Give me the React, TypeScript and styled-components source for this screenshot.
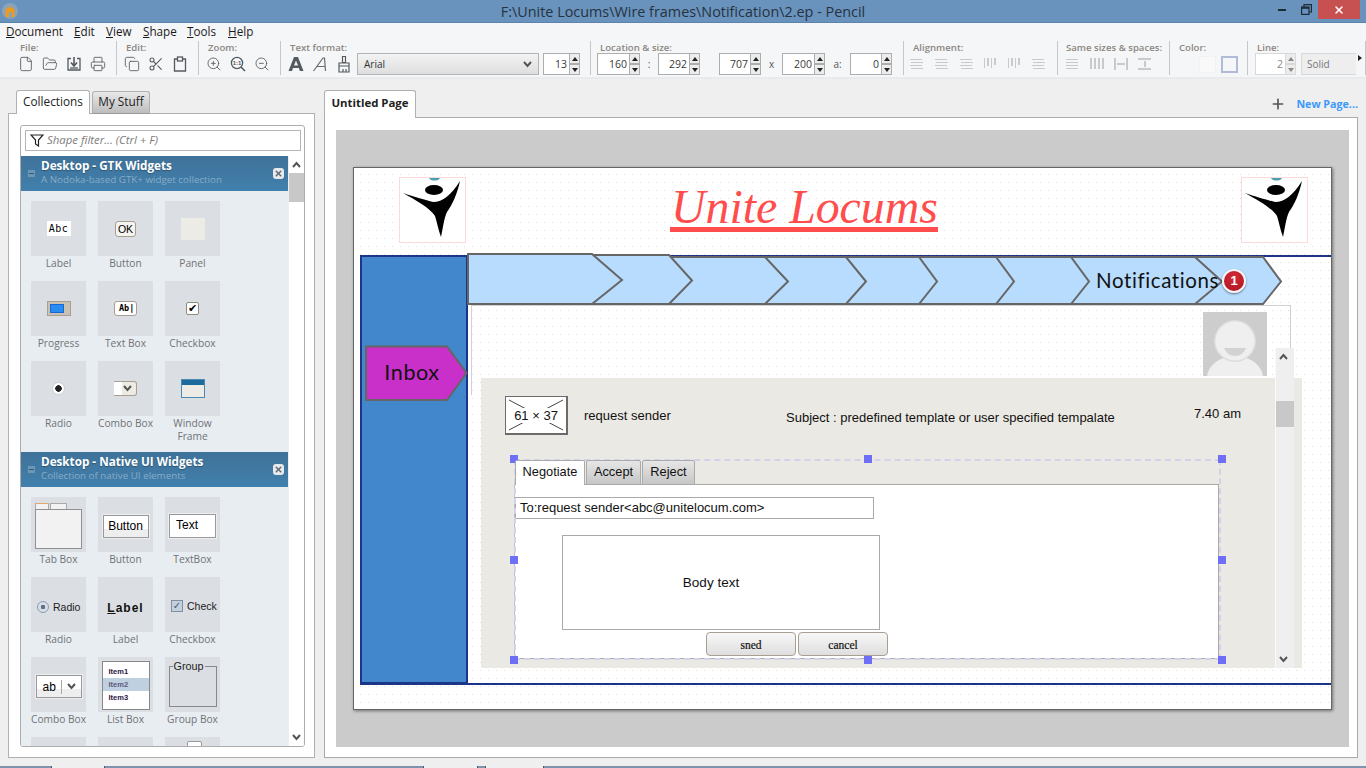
import React from 'react';
import { createGlobalStyle, styled } from 'styled-components';
import { Copy, File, FolderOpen, Plus, Printer, Scissors, X, ZoomIn, ZoomOut } from 'lucide-react';

const UI_FONT = '"Open Sans", "Noto Sans", sans-serif';
const ARIAL = '"Liberation Sans", Arial, sans-serif';
const COMIC = 'Lato, "Open Sans", sans-serif';

// the drawing sits on a free canvas: screen coordinates minus the page origin
const at = (x: number, y: number, w: number, h: number) => `
  position: absolute;
  left: ${x - 354}px;
  top: ${y - 168}px;
  width: ${w}px;
  height: ${h}px;
`;

const GlobalStyle = createGlobalStyle`
  html, body { margin: 0; padding: 0; overflow: hidden; }
  * { box-sizing: border-box; }
`;

const Shell = styled.div`
  width: 1366px;
  height: 768px;
  display: flex;
  flex-direction: column;
  overflow: hidden;
  background: #efefef;
  font-family: ${UI_FONT};
`;

const TitleBar = styled.div`
  height: 23px;
  flex: none;
  position: relative;
  display: flex;
  align-items: center;
  justify-content: center;
  background: #6993bd;
  border-bottom: 1px solid #5b83ab;
  color: #26323f;
  font-size: 14.4px;
`;

const AppIcon = styled.svg`
  position: absolute;
  left: 2px;
  top: 3px;
`;

const WindowControls = styled.div`
  position: absolute;
  right: 6px;
  top: 0;
  display: flex;
  align-items: flex-start;
`;

const WindowButton = styled.div`
  width: 24px;
  height: 19px;
  display: flex;
  align-items: center;
  justify-content: center;
  color: #1d2a38;
`;

const CloseButton = styled(WindowButton)`
  width: 42px;
  background: #c75050;
  color: #fff;
`;

const MenuBar = styled.div`
  height: 18px;
  flex: none;
  display: flex;
  align-items: center;
  padding: 0 0 2px 6px;
  background: #f5f6f8;
  font-size: 11.7px;
  color: #1b1b1b;
`;

const MenuItem = styled.span<{ $w: number }>`
  width: ${({ $w }) => $w}px;
  flex: none;
`;

const Toolbar = styled.div`
  height: 38px;
  flex: none;
  display: flex;
  background: #f5f6f8;
  border-bottom: 2px solid #e9eaec;
`;

const ToolGroup = styled.div<{ $w: number; $pad: number }>`
  width: ${({ $w }) => $w}px;
  flex: none;
  height: 34px;
  padding-left: ${({ $pad }) => $pad}px;
  border-right: 1px solid #c6c7c9;
`;

const ToolLabel = styled.div<{ $indent: number }>`
  height: 12px;
  margin-left: ${({ $indent }) => $indent}px;
  font-size: 9.6px;
  font-weight: 600;
  line-height: 14px;
  color: #8b8680;
  white-space: nowrap;
`;

const ToolRow = styled.div`
  height: 22px;
  display: flex;
  align-items: center;
`;

const ToolIcon = styled.div<{ $off?: boolean }>`
  width: 24px;
  height: 16px;
  flex: none;
  display: flex;
  align-items: center;
  justify-content: flex-start;
  color: ${({ $off }) => ($off ? '#c9cacc' : '#555a5e')};
`;

const FontSelect = styled.div`
  width: 182px;
  height: 22px;
  margin-left: -3px;
  margin-right: 4px;
  padding: 0 6px;
  flex: none;
  display: flex;
  align-items: center;
  justify-content: space-between;
  border: 1px solid #b4b4b4;
  background: linear-gradient(#f3f3f3, #dedede);
  font-size: 10px;
  color: #333;
`;

const Spin = styled.div<{ $w: number }>`
  width: ${({ $w }) => $w}px;
  height: 22px;
  flex: none;
  display: flex;
`;

const SpinValue = styled.div<{ $off?: boolean }>`
  flex: 1;
  height: 22px;
  padding-right: 2px;
  border: 1px solid ${({ $off }) => ($off ? '#d8d8d8' : '#adadad')};
  border-right: none;
  background: #fff;
  font-size: 10.5px;
  line-height: 20px;
  text-align: right;
  color: ${({ $off }) => ($off ? '#888' : '#3a3a3a')};
`;

const SpinButtons = styled.div`
  width: 11px;
  flex: none;
  display: flex;
  flex-direction: column;
`;

const SpinButton = styled.div<{ $down?: boolean; $off?: boolean }>`
  height: 11px;
  display: flex;
  align-items: center;
  justify-content: center;
  border: 1px solid ${({ $off }) => ($off ? '#d8d8d8' : '#adadad')};
  background: #ececec;

  &::after {
    content: '';
    border-left: 3px solid transparent;
    border-right: 3px solid transparent;
    ${({ $down, $off }) =>
      `${$down ? 'border-top' : 'border-bottom'}: 4px solid ${$off ? '#888' : '#222'};`}
  }
`;

const SpinSep = styled.span<{ $w: number }>`
  width: ${({ $w }) => $w}px;
  flex: none;
  text-align: center;
  font-size: 10px;
  color: #555;
`;

const ColorSwatch = styled.div<{ $stroke?: boolean }>`
  width: 17px;
  height: 17px;
  flex: none;
  margin-right: 5px;
  background: ${({ $stroke }) => ($stroke ? 'transparent' : '#f8f9f8')};
  border: ${({ $stroke }) => ($stroke ? '2px solid #b0bbd5' : '1px solid #f1f2f2')};
`;

const SolidSelect = styled.div`
  width: 55px;
  height: 22px;
  flex: none;
  margin-left: 5px;
  padding-left: 5px;
  border: 1px solid #d9d9d9;
  border-right: none;
  background: #eeeeee;
  font-size: 10px;
  line-height: 20px;
  color: #777;
`;

const OverflowArrow = styled.span`
  margin-left: 2px;
  margin-top: -12px;
  border-top: 3px solid transparent;
  border-bottom: 3px solid transparent;
  border-left: 4px solid #222;
`;

const Workspace = styled.div`
  flex: 1;
  display: flex;
  padding: 11px 8px 8px 8px;
  min-height: 0;
`;

const LeftColumn = styled.div`
  width: 307px;
  flex: none;
  display: flex;
  flex-direction: column;
`;

const RightColumn = styled.div`
  width: 1034px;
  margin-left: 9px;
  flex: none;
  display: flex;
  flex-direction: column;
`;

const TabStrip = styled.div`
  height: 24px;
  flex: none;
  display: flex;
  align-items: flex-end;
  gap: 2px;
  padding-left: 8px;
  position: relative;
  z-index: 1;
`;

const SideTab = styled.div<{ $active?: boolean; $w: number }>`
  width: ${({ $w }) => $w}px;
  height: ${({ $active }) => ($active ? 24 : 23)}px;
  border: 1px solid #b0b0b0;
  border-bottom: ${({ $active }) => ($active ? 'none' : '1px solid #999')};
  border-radius: 3px 3px 0 0;
  background: ${({ $active }) => ($active ? '#fff' : 'linear-gradient(#e9e9e9, #bdbdbd)')};
  font-size: 11.8px;
  line-height: ${({ $active }) => ($active ? 21 : 19)}px;
  text-align: center;
  color: #222;
`;

const SidePanel = styled.div`
  flex: 1;
  margin-top: -1px;
  min-height: 0;
  padding: 11px 9px 10px 11px;
  background: #fff;
  border: 1px solid #b0b0b0;
  display: flex;
`;

const Collections = styled.div`
  flex: 1;
  position: relative;
  border: 1px solid #adadad;
  border-radius: 3px;
  overflow: hidden;
  display: flex;
  flex-direction: column;
`;

const FilterBox = styled.div`
  height: 21px;
  flex: none;
  margin: 4px 3px 5px 4px;
  padding: 0 0 2px 4px;
  display: flex;
  align-items: center;
  gap: 3px;
  border: 1px solid #b5b5b5;
  font-size: 11.4px;
  font-style: italic;
  color: #7d7d7d;
`;

const ListArea = styled.div`
  flex: 1;
  min-height: 0;
  display: flex;
`;

const CategoryList = styled.div`
  width: 267px;
  flex: none;
  overflow: hidden;
  background: #e8edf1;
`;

const ListScroll = styled.div`
  width: 16px;
  flex: none;
  position: relative;
  background: #fff;
  border-left: 1px solid #eee;
`;

const ListThumb = styled.div`
  position: absolute;
  left: 0;
  top: 17px;
  width: 15px;
  height: 29px;
  background: #c8c8c8;
`;

const ScrollArrow = styled.svg<{ $bottom?: boolean }>`
  position: absolute;
  left: 3px;
  ${({ $bottom }) => ($bottom ? 'bottom: 5px;' : 'top: 5px;')}
`;

const CategoryHead = styled.div`
  height: 35px;
  position: relative;
  padding: 2px 0 0 20px;
  background: linear-gradient(#3f7299, #4180ad);
`;

const CategoryTitle = styled.div`
  font-size: 11.7px;
  font-weight: 700;
  line-height: 15px;
  color: #fff;
  text-shadow: 0 1px 1px #2b5572;
`;

const CategorySub = styled.div`
  font-size: 9.8px;
  line-height: 13px;
  color: #87abc8;
`;

const Collapse = styled.span`
  position: absolute;
  left: 7px;
  top: 14px;
  width: 7px;
  height: 7px;
  background: #6d96b4;

  &::after {
    content: '';
    position: absolute;
    left: 1px;
    right: 1px;
    top: 3px;
    height: 1px;
    background: #2f5a7a;
  }
`;

const Dismiss = styled.span`
  position: absolute;
  left: 252px;
  top: 12px;
  width: 11px;
  height: 11px;
  border-radius: 3px;
  background: #e7e9ea;
  display: flex;
  align-items: center;
  justify-content: center;
  color: #5d6a75;
`;

const ShapeGrid = styled.div`
  display: grid;
  grid-template-columns: repeat(3, 55px);
  grid-auto-rows: 80px;
  column-gap: 12px;
  padding: 10px 0 11px 10px;
`;

const ShapeCell = styled.div`
  width: 55px;
  display: flex;
  flex-direction: column;
  align-items: center;
`;

const Tile = styled.div`
  width: 55px;
  height: 55px;
  flex: none;
  position: relative;
  display: flex;
  align-items: center;
  justify-content: center;
  overflow: hidden;
  background: #dbdfe3;
  color: #000;
`;

const ShapeName = styled.div`
  width: 67px;
  font-size: 10.2px;
  line-height: 13px;
  padding-top: 1px;
  text-align: center;
  color: #6f7276;
`;

const MiniLabel = styled.div`
  width: 24px;
  height: 15px;
  background: #fff;
  font: 10px/15px "DejaVu Sans Mono", monospace;
  letter-spacing: 0.5px;
  text-align: center;
`;

const MiniOk = styled.div`
  width: 21px;
  height: 16px;
  background: #f6f4f0;
  border: 1px solid #a89f92;
  border-radius: 3px;
  font: 10.5px/14px ${ARIAL};
  text-align: center;
`;

const MiniPanel = styled.div`
  width: 24px;
  height: 22px;
  background: #edebe5;
`;

const MiniProgress = styled.div`
  width: 24px;
  height: 15px;
  padding: 2px 6px 2px 2px;
  background: #c9c1b3;
  border: 1px solid #a89f92;

  &::after {
    content: '';
    display: block;
    height: 100%;
    background: #2b8cf0;
    box-shadow: inset 0 0 0 1px #1668d8;
  }
`;

const MiniText = styled.div`
  width: 23px;
  height: 15px;
  padding-left: 4px;
  background: #fff;
  border: 1px solid #a89f92;
  border-radius: 3px;
  font: 700 8.5px/13px "DejaVu Sans Mono", monospace;
  text-align: left;
`;

const MiniCheck = styled.div`
  width: 13px;
  height: 13px;
  background: #fff;
  border: 1px solid #8f8a82;
  border-radius: 2px;
  font: 700 11px/11px "DejaVu Sans", sans-serif;
  text-align: center;
`;

const MiniRadio = styled.div`
  width: 13px;
  height: 13px;
  border-radius: 50%;
  background: radial-gradient(circle, #222 0 3px, #fff 3.5px);
  border: 1px solid #cfcfcf;
`;

const MiniCombo = styled.div`
  width: 23px;
  height: 15px;
  display: flex;
  border-radius: 0 3px 3px 0;
  border: 1px solid #a89f92;
  border-left: none;
  background: linear-gradient(to right, #fff 0 8px, #eeebe5 8px);
  align-items: center;
  justify-content: flex-end;
  padding-right: 4px;
`;

const MiniWindow = styled.div`
  width: 24px;
  height: 19px;
  border: 1px solid #4a8ab5;
  background: #edebe5;

  &::before {
    content: '';
    display: block;
    height: 5px;
    background: #1c6b9c;
  }
`;

const NativeTabBox = styled.div`
  width: 47px;
  height: 40px;
  margin-top: 9px;
  border: 1px solid #909090;
  background: #f2f2f2;
  position: relative;
`;

const NativeTabs = styled.div`
  position: absolute;
  left: -1px;
  top: -7px;
  display: flex;
  gap: 1px;
`;

const NativeTabHead = styled.div<{ $active?: boolean; $w: number }>`
  width: ${({ $w }) => $w}px;
  height: 6px;
  border: 1px solid #aaa;
  border-bottom: none;
  border-top: 1px solid ${({ $active }) => ($active ? '#e6a868' : '#aaa')};
  background: #f2f2f2;
`;

const NativeButton = styled.div`
  width: 46px;
  height: 23px;
  margin-top: 4px;
  background: linear-gradient(#fff 60%, #eee 60%);
  border: 1px solid #999;
  font: 12px/21px ${ARIAL};
  text-align: center;
  box-shadow: 0 0 0 1px #eceef0;
`;

const NativeText = styled.div`
  width: 47px;
  height: 24px;
  margin-top: 3px;
  padding-left: 6px;
  background: #fff;
  border: 1px solid #999;
  font: 12px/20px ${ARIAL};
  text-align: left;
  box-shadow: 0 0 0 1px #eceef0;
`;

const NativeOption = styled.div<{ $drop: number }>`
  width: 100%;
  margin-top: ${({ $drop }) => $drop}px;
  padding-left: 6px;
  display: flex;
  align-items: center;
  gap: 4px;
  font: 10.5px ${ARIAL};
  color: #222;
  white-space: nowrap;
`;

const NativeRadio = styled.span`
  width: 12px;
  height: 12px;
  flex: none;
  border-radius: 50%;
  border: 1px solid #8b9db0;
  background: radial-gradient(circle, #5d7186 0 2px, #d7dee6 2.5px);
`;

const NativeCheck = styled.span`
  width: 12px;
  height: 12px;
  flex: none;
  border: 1px solid #7d90a5;
  background: #c4d0dc;
  font: 700 10px/10px "DejaVu Sans", sans-serif;
  color: #475a70;
  text-align: center;
`;

const NativeLabel = styled.div`
  margin-top: 6px;
  font: 700 12px ${ARIAL};
  letter-spacing: 1px;
  color: #111;
`;

const NativeCombo = styled.div`
  width: 46px;
  height: 23px;
  margin-top: 4px;
  display: flex;
  align-items: center;
  padding-left: 6px;
  background: linear-gradient(#fff 60%, #eee 60%);
  border: 1px solid #999;
  font: 12px ${ARIAL};
  gap: 5px;
  box-shadow: 0 0 0 1px #eceef0;
`;

const ComboRule = styled.span`
  width: 1px;
  height: 14px;
  background: #aaa;
`;

const NativeList = styled.div`
  width: 48px;
  height: 49px;
  margin-top: 2px;
  padding-top: 3px;
  background: #fff;
  border: 1px solid #888;
`;

const NativeListItem = styled.div<{ $active?: boolean }>`
  height: 13px;
  padding-left: 6px;
  font: 700 7.5px/13px ${ARIAL};
  color: ${({ $active }) => ($active ? '#5b5b7a' : '#2c1540')};
  background: ${({ $active }) => ($active ? '#bfd0e0' : 'transparent')};
`;

const NativeGroup = styled.div`
  width: 48px;
  height: 41px;
  margin-top: 3px;
  border: 1px solid #888;
  position: relative;
`;

const NativeGroupName = styled.span`
  position: absolute;
  left: 3px;
  top: -7px;
  padding: 0 1px;
  background: #dbdfe3;
  font: 10.8px/13px ${ARIAL};
  color: #222;
`;

const StubBox = styled.div`
  position: absolute;
  left: 22px;
  top: 4px;
  width: 15px;
  height: 20px;
  background: #fff;
  border: 1px solid #999;
  border-radius: 2px 2px 0 0;
`;

const PageHead = styled.div`
  height: 28px;
  flex: none;
  margin-bottom: -1px;
  display: flex;
  align-items: center;
  position: relative;
  z-index: 1;
`;

const PageTab = styled.div`
  width: 92px;
  height: 28px;
  border: 1px solid #b0b0b0;
  border-bottom: none;
  border-radius: 3px 3px 0 0;
  background: #fff;
  font-size: 11.4px;
  font-weight: 700;
  line-height: 23px;
  text-align: center;
  color: #222;
`;

const NewPage = styled.div`
  margin-left: auto;
  display: flex;
  align-items: center;
  gap: 10px;
  padding-bottom: 1px;
  font-size: 10.7px;
  font-weight: 700;
  color: #3c99fa;
  white-space: nowrap;
`;

const PagePanel = styled.div`
  flex: 1;
  min-height: 0;
  padding: 12px 8px 10px 11px;
  background: #fff;
  border: 1px solid #aaa;
  display: flex;
`;

const GreyDesk = styled.div`
  flex: 1;
  padding: 37px 17px 0 17px;
  background: #cbcbcb;
`;

const dots = `
  background-color: #dedede;
  background-image:
    linear-gradient(to right, transparent 1px, #fff 1px),
    linear-gradient(to bottom, transparent 1px, #fff 1px);
  background-size: 8px 8px;
`;

const Sheet = styled.div`
  width: 979px;
  height: 543px;
  position: relative;
  border: 1px solid #666;
  box-shadow: 1px 1px 3px rgba(0, 0, 0, 0.45);
  ${dots}
  background-position: 6px 6px;
`;

const LogoFrame = styled.div<{ $x: number }>`
  ${({ $x }) => at($x, 177, 67, 66)}
  background: #fff;
  border: 1px solid #fddada;
`;

const BrandTitle = styled.div`
  ${at(670, 183, 268, 49)}
  border-bottom: 5px solid #ff4d4d;
  font: italic 47.8px/48px "Liberation Serif", "Times New Roman", serif;
  color: #ff4d4d;
  padding-left: 1px;
  white-space: nowrap;
`;

const NavyLine = styled.div<{ $x: number; $y: number; $w: number }>`
  ${({ $x, $y, $w }) => at($x, $y, $w, 2)}
  background: #1c3589;
`;

const SideBlock = styled.div`
  ${at(360, 255, 108, 429)}
  background: #4286cb;
  border: 2px solid #1c3589;
`;

const ChevronSvg = styled.svg`
  ${at(466, 252, 818, 55)}
`;

const InboxSvg = styled.svg`
  ${at(364, 345, 104, 57)}
`;

const InboxText = styled.div`
  ${at(365, 345, 94, 54)}
  font: 400 21.5px/54px ${COMIC};
  letter-spacing: 0.6px;
  text-align: center;
  color: #111;
`;

const NotificationText = styled.div`
  ${at(1096, 265, 124, 30)}
  font: 400 20.5px/30px ${COMIC};
  letter-spacing: 0.6px;
  color: #111;
  white-space: nowrap;
`;

const Badge = styled.div`
  ${at(1222, 269, 24, 24)}
  border-radius: 50%;
  border: 2px solid #f4f4f4;
  background: radial-gradient(circle at 50% 30%, #d32a35, #ab1520);
  box-shadow: 0 1px 2px rgba(0, 0, 0, 0.5);
  font: 700 13px/20px ${ARIAL};
  text-align: center;
  color: #fff;
`;

const InnerFrame = styled.div`
  ${at(471, 305, 820, 90)}
  border: 1px solid #d0d0d0;
  border-bottom: none;
`;

const AvatarSvg = styled.svg`
  ${at(1203, 312, 64, 64)}
`;

const MailPanel = styled.div`
  ${at(481, 378, 821, 290)}
  background: #ebe9e3;
  padding-top: 18px;
`;

const MailRow = styled.div`
  height: 39px;
  padding-left: 24px;
  display: flex;
  align-items: center;
  font: 13px ${ARIAL};
  color: #111;
`;

const Placeholder = styled.div`
  width: 63px;
  height: 39px;
  flex: none;
  position: relative;
  display: flex;
  align-items: center;
  justify-content: center;
  background: #fff;
  border: 2px solid #6b6b6b;
  border-top-width: 1px;
  border-left-width: 1px;
  font: 13px ${ARIAL};
`;

const PlaceholderLines = styled.svg`
  position: absolute;
  inset: 0;
`;

const PlaceholderText = styled.span`
  position: relative;
  background: #fff;
  padding: 0 1px;
`;

const Sender = styled.span`
  margin-left: 16px;
  width: 202px;
  flex: none;
`;

const Subject = styled.span`
  width: 408px;
  flex: none;
  margin-top: 4px;
`;

const SentAt = styled.span`
  margin-top: -5px;
`;

const TabWidget = styled.div`
  position: relative;
  width: 705px;
  height: 198px;
  margin: 25px 0 0 33px;
`;

const WidgetTabs = styled.div`
  height: 25px;
  display: flex;
  gap: 1px;
  padding-left: 1px;
  position: relative;
  z-index: 1;
`;

const WidgetTab = styled.div<{ $active?: boolean; $w: number }>`
  width: ${({ $w }) => $w}px;
  height: 25px;
  border: 1px solid #aaa;
  border-bottom: ${({ $active }) => ($active ? 'none' : '1px solid #aaa')};
  border-radius: 2px 2px 0 0;
  background: ${({ $active }) => ($active ? '#fff' : 'linear-gradient(#e6e6e6, #c6c6c6)')};
  font: 12.8px/22px ${ARIAL};
  text-align: center;
  color: #111;
`;

const WidgetBody = styled.div`
  height: 175px;
  margin-top: -1px;
  padding-top: 12px;
  background: #fff;
  border: 1px solid #aaa;
  border-left-color: #bcbcd8;
`;

const ToInput = styled.div`
  width: 359px;
  height: 22px;
  padding-left: 4px;
  border: 1px solid #aaa;
  font: 13px/20px ${ARIAL};
  color: #111;
  white-space: nowrap;
`;

const BodyBox = styled.div`
  width: 318px;
  height: 95px;
  margin: 16px 0 0 47px;
  padding-right: 20px;
  display: flex;
  align-items: center;
  justify-content: center;
  border: 1px solid #aaa;
  font: 13.5px ${ARIAL};
  color: #111;
`;

const FormButtons = styled.div`
  margin: 2px 0 0 191px;
  display: flex;
  gap: 2px;
`;

const FormButton = styled.div`
  width: 90px;
  height: 24px;
  border: 1px solid #a89f92;
  border-radius: 4px;
  background: linear-gradient(#f8f8f8, #dedede);
  font: 500 11.5px/24px "Liberation Serif", serif;
  text-align: center;
  color: #111;
  -webkit-text-stroke: 0.2px #111;
`;

const Selection = styled.div`
  position: absolute;
  left: 0;
  top: -1px;
  width: 707px;
  height: 201px;
  border: 2px dashed #d4d2ea;
  pointer-events: none;
`;

const Handle = styled.span<{ $col: number; $row: number }>`
  position: absolute;
  width: 8px;
  height: 8px;
  background: #6f6ff5;
  left: ${({ $col }) => -6 + $col * 354}px;
  top: ${({ $row }) => -6 + $row * 100.5}px;
`;

const PanelScroll = styled.div`
  ${at(1275, 348, 19, 320)}
  background: #efefef;
  border-left: 1px solid #fafafa;
`;

const PanelThumb = styled.div`
  position: absolute;
  left: 0;
  top: 53px;
  width: 18px;
  height: 26px;
  background: #c8c8c8;
`;

const StatusStrip = styled.div`
  height: 2px;
  flex: none;
  position: relative;
  background: #7d93ae;
`;

const StatusTab = styled.span<{ $x: number; $w: number }>`
  position: absolute;
  left: ${({ $x }) => $x}px;
  width: ${({ $w }) => $w}px;
  top: 0;
  height: 2px;
  background: #eef0f2;
  border-left: 1px solid #555;
  border-right: 1px solid #555;
`;

const Chevron = ({ up }: { up?: boolean }) => (
  <svg width="9" height="7" viewBox="0 0 9 7" fill="none" stroke="#555" strokeWidth="2">
    <path d={up ? 'M1 6l3.5-4L8 6' : 'M1 1l3.5 4L8 1'} />
  </svg>
);

const SmallX = () => <X size={9} strokeWidth={4} />;

const MinimizeGlyph = () => (
  <svg width="8" height="2" viewBox="0 0 8 2" fill="currentColor">
    <rect width="8" height="2" />
  </svg>
);

const RestoreGlyph = () => (
  <svg width="11" height="11" viewBox="0 0 11 11" fill="none" stroke="currentColor" strokeWidth="1.2">
    <path d="M3 3V.6h7.400V8H8" />
    <rect x=".6" y="3" width="7.400" height="7.400" />
    <path d="M.6 4h7.400" strokeWidth="1.6" />
  </svg>
);

const SaveIcon = () => (
  <svg width="16" height="16" viewBox="0 0 16 16" fill="none" stroke="currentColor" strokeWidth="1.3">
    <path d="M5 2.500H2v11.500h12V2.500h-3" />
    <path d="M8 1v8M5 6.500L8 10l3-3.500" strokeWidth="1.600" />
    <path d="M4 12h8" />
  </svg>
);

const PasteIcon = () => (
  <svg width="16" height="16" viewBox="0 0 16 16" fill="none" stroke="currentColor" strokeWidth="1.3">
    <path d="M5 3H2.500v12h11V3H11" />
    <rect x="5.500" y="1" width="5" height="4" />
  </svg>
);

const ActualSizeIcon = () => (
  <svg width="16" height="16" viewBox="0 0 16 16" fill="none" stroke="currentColor" strokeWidth="1.3">
    <circle cx="7" cy="7" r="5.600" />
    <path d="M11 11l4 4" strokeWidth="1.600" />
    <text x="7" y="9" fontSize="6" fontWeight="700" textAnchor="middle" fill="currentColor" stroke="none" fontFamily="Liberation Sans">1:1</text>
  </svg>
);

const BoldA = () => (
  <svg width="16" height="16" viewBox="0 0 16 16" fill="#555a5e">
    <path d="M6 1h4l5.500 14h-3.600l-1-3H5l-1 3H.5zM8 4.500L6 9.500h4z" fillRule="evenodd" />
  </svg>
);

const ItalicA = () => (
  <svg width="16" height="16" viewBox="0 0 16 16" fill="none" stroke="#666b70" strokeWidth="1.2">
    <path d="M1.500 15L11 2h1.500L13.500 15M4.500 10.500h8.500" />
  </svg>
);

const BrushIcon = () => (
  <svg width="16" height="18" viewBox="0 0 16 18" fill="none" stroke="#555a5e" strokeWidth="1.2">
    <path d="M6.500 1.500h3v6h-3zM3 8h10v3H3zM3 11h10v6H3z" />
    <path d="M7 14v3M10 14v3" />
  </svg>
);

const Lines = ({ rows }: { rows: number[][] }) => (
  <svg width="16" height="12" viewBox="0 0 16 12" fill="currentColor">
    {rows.map((r, i) => (
      <rect key={i} x={r[0]} y={r[1]} width={r[2]} height={r[3]} />
    ))}
  </svg>
);

const hLines = (x: number[]) => x.map((v, i) => [v, 1 + i * 3, 12, 1]);
const vLines = [[2, 0, 1, 10], [5, 0, 2, 8], [9, 0, 1, 10], [12, 0, 2, 7]];

const SpinBox = ({ value, w, off }: { value: string; w: number; off?: boolean }) => (
  <Spin $w={w}>
    <SpinValue $off={off}>{value}</SpinValue>
    <SpinButtons>
      <SpinButton $off={off} />
      <SpinButton $off={off} $down />
    </SpinButtons>
  </Spin>
);

const LogoPerson = () => (
  <svg width="65" height="64" viewBox="0 0 65 64">
    <path d="M29 0h11c-1 2-3 2.500-5.500 2.500S30 2 29 0z" fill="#4aa0ad" />
    <ellipse cx="34" cy="12" rx="9" ry="5" fill="#000" />
    <path d="M3 15C14 19 26 22 33 24c10 0 18-7 27-21-3 14-8 24-13 31-3 6-4 16-6 25-3-8-4-15-6-21C30 30 17 23 3 15z" fill="#000" />
  </svg>
);

const menuItems: [string, string, number][] = [
  ['D', 'ocument', 68],
  ['E', 'dit', 32],
  ['V', 'iew', 37],
  ['S', 'hape', 44],
  ['T', 'ools', 41],
  ['H', 'elp', 40],
];

const gtkShapes: [string, React.ReactNode][] = [
  ['Label', <MiniLabel>Abc</MiniLabel>],
  ['Button', <MiniOk>OK</MiniOk>],
  ['Panel', <MiniPanel />],
  ['Progress', <MiniProgress />],
  ['Text Box', <MiniText>Ab|</MiniText>],
  ['Checkbox', <MiniCheck>✔</MiniCheck>],
  ['Radio', <MiniRadio />],
  ['Combo Box', <MiniCombo><Chevron /></MiniCombo>],
  ['Window Frame', <MiniWindow />],
];

const nativeShapes: [string, React.ReactNode][] = [
  ['Tab Box', (
    <NativeTabBox>
      <NativeTabs>
        <NativeTabHead $active $w={14} />
        <NativeTabHead $w={17} />
      </NativeTabs>
    </NativeTabBox>
  )],
  ['Button', <NativeButton>Button</NativeButton>],
  ['TextBox', <NativeText>Text</NativeText>],
  ['Radio', <NativeOption $drop={5}><NativeRadio />Radio</NativeOption>],
  ['Label', <NativeLabel><u>L</u>abel</NativeLabel>],
  ['Checkbox', <NativeOption $drop={2}><NativeCheck>✓</NativeCheck>Check</NativeOption>],
  ['Combo Box', <NativeCombo>ab<ComboRule /><Chevron /></NativeCombo>],
  ['List Box', (
    <NativeList>
      <NativeListItem>Item1</NativeListItem>
      <NativeListItem $active>Item2</NativeListItem>
      <NativeListItem>Item3</NativeListItem>
    </NativeList>
  )],
  ['Group Box', <NativeGroup><NativeGroupName>Group</NativeGroupName></NativeGroup>],
  ['', null],
  ['', null],
  ['', <StubBox />],
];

const ShapeSet = ({ shapes }: { shapes: [string, React.ReactNode][] }) => (
  <ShapeGrid>
    {shapes.map(([name, art], i) => (
      <ShapeCell key={i}>
        <Tile>{art}</Tile>
        <ShapeName>{name}</ShapeName>
      </ShapeCell>
    ))}
  </ShapeGrid>
);

const Category = ({ title, sub }: { title: string; sub: string }) => (
  <CategoryHead>
    <Collapse />
    <CategoryTitle>{title}</CategoryTitle>
    <CategorySub>{sub}</CategorySub>
    <Dismiss><SmallX /></Dismiss>
  </CategoryHead>
);

// knee of each arrow in the breadcrumb and its tip, left to right
const crumbs = [
  [468, 592, 622, 254],
  [592, 669, 692, 255],
  [669, 765, 788, 257],
  [765, 846, 866, 257],
  [846, 919, 937, 257],
  [919, 996, 1014, 257],
  [996, 1071, 1089, 257],
  [1071, 1195, 1222, 257],
  [1195, 1263, 1281, 257],
];

export default function App() {
  return (
    <Shell>
      <GlobalStyle />
      <TitleBar>
        <AppIcon width="16" height="16" viewBox="0 0 16 16">
          <circle cx="8" cy="8" r="8" fill="#8aa3b8" />
          <path d="M3.500 6.500L8 3.500l4.500 3V14h-2.500V9h-3v5H3.500z" fill="#f09a1a" />
        </AppIcon>
        F:\Unite Locums\Wire frames\Notification\2.ep - Pencil
        <WindowControls>
          <WindowButton><MinimizeGlyph /></WindowButton>
          <WindowButton><RestoreGlyph /></WindowButton>
          <CloseButton><X size={12} strokeWidth={3} /></CloseButton>
        </WindowControls>
      </TitleBar>

      <MenuBar>
        {menuItems.map(([key, rest, w]) => (
          <MenuItem key={key} $w={w}><u>{key}</u>{rest}</MenuItem>
        ))}
      </MenuBar>

      <Toolbar>
        <ToolGroup $w={117} $pad={18}>
          <ToolLabel $indent={2}>File:</ToolLabel>
          <ToolRow>
            <ToolIcon><File size={16} strokeWidth={1.3} /></ToolIcon>
            <ToolIcon><FolderOpen size={16} strokeWidth={1.3} /></ToolIcon>
            <ToolIcon><SaveIcon /></ToolIcon>
            <ToolIcon><Printer size={16} strokeWidth={1.3} /></ToolIcon>
          </ToolRow>
        </ToolGroup>
        <ToolGroup $w={82} $pad={7}>
          <ToolLabel $indent={2}>Edit:</ToolLabel>
          <ToolRow>
            <ToolIcon><Copy size={16} strokeWidth={1.3} /></ToolIcon>
            <ToolIcon><Scissors size={16} strokeWidth={1.6} /></ToolIcon>
            <ToolIcon><PasteIcon /></ToolIcon>
          </ToolRow>
        </ToolGroup>
        <ToolGroup $w={82} $pad={7}>
          <ToolLabel $indent={2}>Zoom:</ToolLabel>
          <ToolRow>
            <ToolIcon><ZoomIn size={16} strokeWidth={1.3} /></ToolIcon>
            <ToolIcon><ActualSizeIcon /></ToolIcon>
            <ToolIcon><ZoomOut size={16} strokeWidth={1.3} /></ToolIcon>
          </ToolRow>
        </ToolGroup>
        <ToolGroup $w={310} $pad={7}>
          <ToolLabel $indent={2}>Text format:</ToolLabel>
          <ToolRow>
            <ToolIcon><BoldA /></ToolIcon>
            <ToolIcon><ItalicA /></ToolIcon>
            <ToolIcon><BrushIcon /></ToolIcon>
            <FontSelect>Arial<Chevron /></FontSelect>
            <SpinBox value="13" w={37} />
          </ToolRow>
        </ToolGroup>
        <ToolGroup $w={313} $pad={6}>
          <ToolLabel $indent={3}>Location &amp; size:</ToolLabel>
          <ToolRow>
            <SpinBox value="160" w={43} />
            <SpinSep $w={18}>:</SpinSep>
            <SpinBox value="292" w={42} />
            <SpinSep $w={19} />
            <SpinBox value="707" w={42} />
            <SpinSep $w={21}>x</SpinSep>
            <SpinBox value="200" w={43} />
            <SpinSep $w={25}>a:</SpinSep>
            <SpinBox value="0" w={42} />
          </ToolRow>
        </ToolGroup>
        <ToolGroup $w={154} $pad={6}>
          <ToolLabel $indent={3}>Alignment:</ToolLabel>
          <ToolRow>
            {[0, 1, 2].map(i => (
              <ToolIcon key={i} $off><Lines rows={hLines([i, i + 1, i, i + 1])} /></ToolIcon>
            ))}
            {[0, 1].map(i => (
              <ToolIcon key={i} $off><Lines rows={vLines} /></ToolIcon>
            ))}
            <ToolIcon $off><Lines rows={hLines([2, 3, 2, 3])} /></ToolIcon>
          </ToolRow>
        </ToolGroup>
        <ToolGroup $w={112} $pad={7}>
          <ToolLabel $indent={1}>Same sizes &amp; spaces:</ToolLabel>
          <ToolRow>
            <ToolIcon $off><Lines rows={hLines([1, 1, 1, 1])} /></ToolIcon>
            <ToolIcon $off><Lines rows={[[1, 0, 2, 11], [5, 0, 2, 11], [9, 0, 2, 11], [13, 0, 2, 11]]} /></ToolIcon>
            <ToolIcon $off><Lines rows={[[1, 0, 2, 12], [13, 0, 2, 12], [4, 5, 8, 2]]} /></ToolIcon>
            <ToolIcon $off><Lines rows={[[1, 0, 13, 2], [1, 10, 13, 2], [7, 3, 2, 6]]} /></ToolIcon>
          </ToolRow>
        </ToolGroup>
        <ToolGroup $w={78} $pad={9}>
          <ToolLabel $indent={0}>Color:</ToolLabel>
          <ToolRow>
            <SpinSep $w={20} />
            <ColorSwatch />
            <ColorSwatch $stroke />
          </ToolRow>
        </ToolGroup>
        <ToolGroup $w={118} $pad={7}>
          <ToolLabel $indent={2}>Line:</ToolLabel>
          <ToolRow>
            <SpinBox value="2" w={41} off />
            <SolidSelect>Solid</SolidSelect>
            <OverflowArrow />
          </ToolRow>
        </ToolGroup>
      </Toolbar>

      <Workspace>
        <LeftColumn>
          <TabStrip>
            <SideTab $active $w={74}>Collections</SideTab>
            <SideTab $w={58}>My Stuff</SideTab>
          </TabStrip>
          <SidePanel>
            <Collections>
              <FilterBox>
                <svg width="14" height="14" viewBox="0 0 14 14" fill="none" stroke="#222" strokeWidth="1.2">
                  <path d="M1 2h12L8.500 7v6l-3-2V7z" />
                </svg>
                Shape filter... (Ctrl + F)
              </FilterBox>
              <ListArea>
                <CategoryList>
                  <Category title="Desktop - GTK Widgets" sub="A Nodoka-based GTK+ widget collection" />
                  <ShapeSet shapes={gtkShapes} />
                  <Category title="Desktop - Native UI Widgets" sub="Collection of native UI elements" />
                  <ShapeSet shapes={nativeShapes} />
                </CategoryList>
                <ListScroll>
                  <ScrollArrow width="9" height="7" viewBox="0 0 9 7" fill="none" stroke="#555" strokeWidth="2">
                    <path d="M1 6l3.500-4L8 6" />
                  </ScrollArrow>
                  <ListThumb />
                  <ScrollArrow $bottom width="9" height="7" viewBox="0 0 9 7" fill="none" stroke="#555" strokeWidth="2">
                    <path d="M1 1l3.500 4L8 1" />
                  </ScrollArrow>
                </ListScroll>
              </ListArea>
            </Collections>
          </SidePanel>
        </LeftColumn>

        <RightColumn>
          <PageHead>
            <PageTab>Untitled Page</PageTab>
            <NewPage>
              <Plus size={16} strokeWidth={2.5} color="#555" />
              New Page...
            </NewPage>
          </PageHead>
          <PagePanel>
            <GreyDesk>
              <Sheet>
                <LogoFrame $x={399}><LogoPerson /></LogoFrame>
                <BrandTitle>Unite Locums</BrandTitle>
                <LogoFrame $x={1241}><LogoPerson /></LogoFrame>

                <NavyLine $x={468} $y={255} $w={863} />
                <NavyLine $x={360} $y={683} $w={971} />
                <SideBlock />

                <InnerFrame />
                <AvatarSvg viewBox="0 0 64 64">
                  <rect width="64" height="64" fill="#cdcdcd" />
                  <ellipse cx="32" cy="66" rx="28" ry="22" fill="#efefef" />
                  <circle cx="32" cy="29" r="21" fill="#dedede" />
                  <circle cx="32" cy="29" r="19.500" fill="#efefef" />
                  <path d="M21 36h22c-2 5-6 8-11 8s-9-3-11-8z" fill="#d2d2d2" />
                </AvatarSvg>

                <ChevronSvg viewBox="466 252 818 55">
                  {[...crumbs].reverse().map(([start, knee, tip, top]) => (
                    <path
                      key={start}
                      d={`M${start} ${top}H${knee}L${tip} ${(top + 304) / 2 + 1}L${knee} 304H${start}Z`}
                      fill="#b8dcfd"
                      stroke="#666"
                      strokeWidth="2"
                    />
                  ))}
                </ChevronSvg>
                <NotificationText>Notifications</NotificationText>
                <Badge>1</Badge>

                <InboxSvg viewBox="364 345 104 57">
                  <path d="M366 346.500H447L466.500 373L447 400H366Z" fill="#c930c9" stroke="#666" strokeWidth="2" />
                </InboxSvg>
                <InboxText>Inbox</InboxText>

                <MailPanel>
                  <MailRow>
                    <Placeholder>
                      <PlaceholderLines width="60" height="36" viewBox="0 0 60 36" stroke="#444" strokeWidth="1">
                        <path d="M3 3L22 13M57 3L38 13M3 33L22 23M57 33L38 23" />
                      </PlaceholderLines>
                      <PlaceholderText>61 × 37</PlaceholderText>
                    </Placeholder>
                    <Sender>request sender</Sender>
                    <Subject>Subject : predefined template or user specified tempalate</Subject>
                    <SentAt>7.40 am</SentAt>
                  </MailRow>
                  <TabWidget>
                    <WidgetTabs>
                      <WidgetTab $active $w={70}>Negotiate</WidgetTab>
                      <WidgetTab $w={55}>Accept</WidgetTab>
                      <WidgetTab $w={53}>Reject</WidgetTab>
                    </WidgetTabs>
                    <WidgetBody>
                      <ToInput>To:request sender&lt;abc@unitelocum.com&gt;</ToInput>
                      <BodyBox>Body text</BodyBox>
                      <FormButtons>
                        <FormButton>sned</FormButton>
                        <FormButton>cancel</FormButton>
                      </FormButtons>
                    </WidgetBody>
                    <Selection>
                      {[[0, 0], [1, 0], [2, 0], [0, 1], [2, 1], [0, 2], [1, 2], [2, 2]].map(([c, r]) => (
                        <Handle key={`${c}-${r}`} $col={c} $row={r} />
                      ))}
                    </Selection>
                  </TabWidget>
                </MailPanel>

                <PanelScroll>
                  <ScrollArrow width="9" height="7" viewBox="0 0 9 7" fill="none" stroke="#555" strokeWidth="2">
                    <path d="M1 6l3.500-4L8 6" />
                  </ScrollArrow>
                  <PanelThumb />
                  <ScrollArrow $bottom width="9" height="7" viewBox="0 0 9 7" fill="none" stroke="#555" strokeWidth="2">
                    <path d="M1 1l3.500 4L8 1" />
                  </ScrollArrow>
                </PanelScroll>
              </Sheet>
            </GreyDesk>
          </PagePanel>
        </RightColumn>
      </Workspace>

      <StatusStrip>
        <StatusTab $x={51} $w={54} />
        <StatusTab $x={423} $w={55} />
        <StatusTab $x={485} $w={59} />
      </StatusStrip>
    </Shell>
  );
}
